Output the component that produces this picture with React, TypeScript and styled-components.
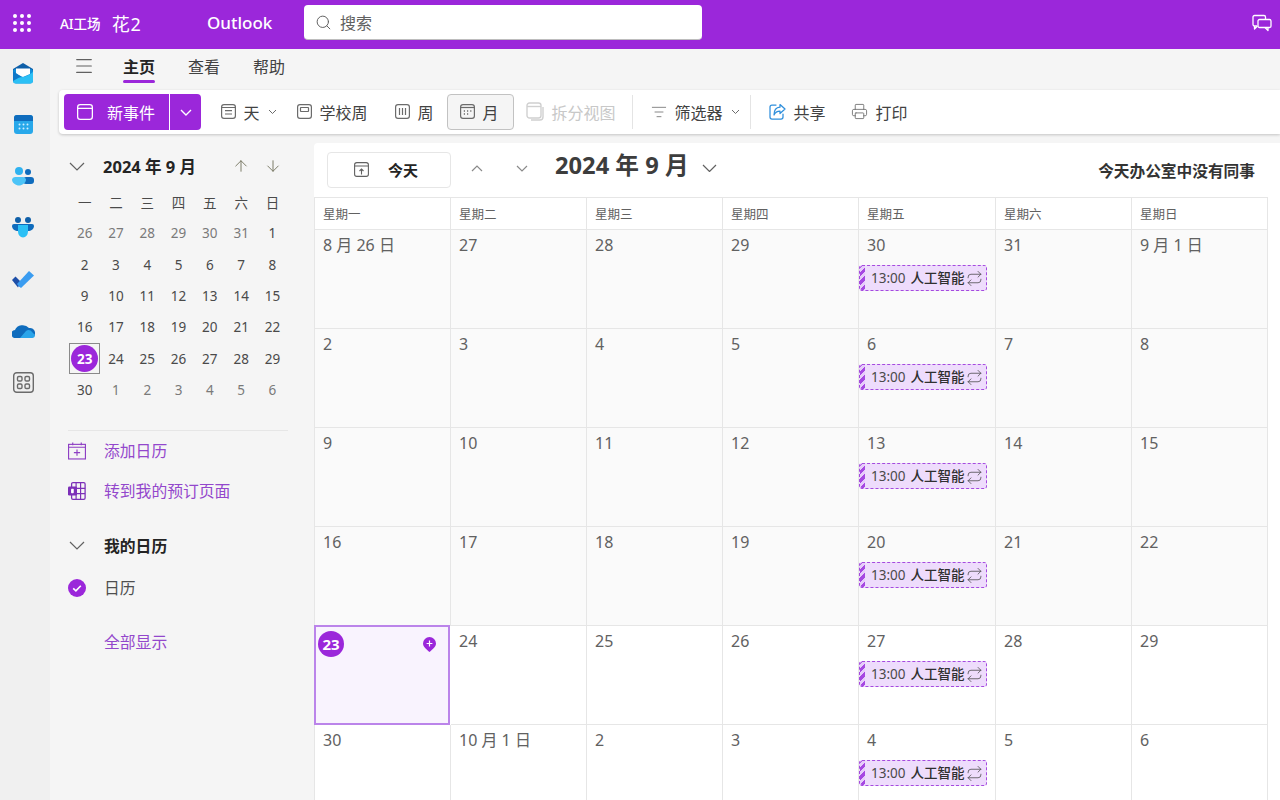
import styled, { createGlobalStyle } from 'styled-components';
import { ArrowUp, ArrowDown, Search, Menu, Printer, ListFilter, Repeat } from 'lucide-react';

const PURPLE = '#9b27da';
const FONT = `'Noto Sans', 'Noto Sans CJK SC', sans-serif`;

const GlobalStyle = createGlobalStyle`
  html, body { margin: 0; padding: 0; height: 100%; overflow: hidden; }
  body { font-family: ${FONT}; background: #f5f5f5; color: #424242; }
  * { box-sizing: border-box; }
`;

const Page = styled.div`
  display: flex;
  flex-direction: column;
  width: 1280px;
  height: 800px;
  overflow: hidden;
`;

const TopBar = styled.header`
  flex: none;
  display: flex;
  align-items: center;
  height: 49px;
  background: ${PURPLE};
  color: #fff;
  padding: 0 8px 4px 0;
`;

const Waffle = styled.div`
  display: grid;
  grid-template-columns: repeat(3, 4px);
  gap: 3px;
  margin-left: 13px;
  span { width: 4px; height: 4px; border-radius: 50%; background: #fff; }
`;

const Brand = styled.div`
  display: flex;
  align-items: center;
  gap: 11px;
  margin-left: 29px;
  width: 115px;
  font-size: 13.5px;
  font-weight: 500;
  white-space: nowrap;
`;

const BrandMark = styled.span`
  font-size: 18px;
  font-weight: 400;
  letter-spacing: 1px;
`;

const AppName = styled.div`
  margin-left: 32px;
  width: 97px;
  font-size: 17px;
  font-weight: 500;
`;

const SearchBox = styled.div`
  display: flex;
  align-items: center;
  gap: 8px;
  width: 398px;
  height: 35px;
  padding-left: 11px;
  background: #fff;
  border-radius: 4px;
  border-bottom: 1px solid #bdbdbd;
  color: #616161;
  font-size: 16px;
`;

const TopRight = styled.div`
  margin-left: auto;
  display: flex;
`;

const Body = styled.div`
  flex: 1;
  display: flex;
  min-height: 0;
`;

const Rail = styled.nav`
  flex: none;
  width: 50px;
  background: #f0f0f0;
  display: flex;
  flex-direction: column;
  align-items: center;
  padding-right: 4px;
`;

const RailItem = styled.div`
  height: 51.5px;
  width: 100%;
  padding-bottom: 3px;
  display: flex;
  align-items: center;
  justify-content: center;
`;

const Main = styled.div`
  flex: 1;
  min-width: 0;
  display: flex;
  flex-direction: column;
`;

const TabRow = styled.div`
  flex: none;
  height: 41px;
  display: flex;
  align-items: center;
  padding: 0 0 8px 23px;
`;

const Tab = styled.div<{ $active?: boolean }>`
  position: relative;
  margin-left: ${(p) => (p.$active ? '28px' : '33px')};
  font-size: 16px;
  font-weight: ${(p) => (p.$active ? 700 : 400)};
  color: ${(p) => (p.$active ? '#242424' : '#424242')};
  &::after {
    content: '';
    display: ${(p) => (p.$active ? 'block' : 'none')};
    position: absolute;
    left: 0;
    right: 0;
    bottom: -5px;
    height: 3px;
    border-radius: 2px;
    background: ${PURPLE};
  }
`;

const Toolbar = styled.div`
  flex: none;
  height: 44px;
  margin-left: 9px;
  display: flex;
  align-items: center;
  padding-left: 5px;
  background: #fff;
  border-radius: 4px 0 0 4px;
  box-shadow: 0 1px 3px rgba(0, 0, 0, 0.2);
  font-size: 16px;
`;

const NewEvent = styled.div`
  display: flex;
  width: 137px;
  height: 36px;
  margin-right: 7.5px;
  border-radius: 4px;
  overflow: hidden;
  background: ${PURPLE};
  color: #fff;
`;

const NewEventMain = styled.div`
  flex: 1;
  display: flex;
  align-items: center;
  gap: 14px;
  padding-left: 13px;
  border-right: 1px solid #fff;
`;

const NewEventArrow = styled.div`
  width: 31px;
  display: flex;
  align-items: center;
  justify-content: center;
`;

const ToolButton = styled.div<{ $selected?: boolean; $disabled?: boolean; $endPad?: number; $after?: number }>`
  height: 36px;
  display: flex;
  align-items: center;
  gap: 8px;
  padding: 0 ${(p) => p.$endPad ?? 12}px 1px 12px;
  margin-right: ${(p) => p.$after ?? 0}px;
  border-radius: 4px;
  white-space: nowrap;
  color: ${(p) => (p.$disabled ? '#c8c8c8' : '#424242')};
  background: ${(p) => (p.$selected ? '#f5f5f5' : 'transparent')};
  border: ${(p) => (p.$selected ? '1px solid #c2c2c2' : 'none')};
  svg { color: ${(p) => (p.$disabled ? '#d0d0d0' : '#6b6b6b')}; }
`;

const ToolDivider = styled.div`
  width: 1px;
  height: 34px;
  background: #e4e4e4;
  margin: 0 6px 0 4px;
`;

const Lower = styled.div`
  flex: 1;
  min-height: 0;
  display: flex;
  margin-top: 9px;
`;

const Sidebar = styled.aside`
  flex: none;
  width: 264px;
  padding: 9px 26px 0 18px;
`;

const MiniHeader = styled.div`
  display: flex;
  align-items: center;
  height: 28px;
  padding-left: 1px;
  color: #616161;
`;

const MiniTitle = styled.div`
  margin-left: 18px;
  font-size: 16.5px;
  font-weight: 700;
  color: #242424;
  flex: 1;
`;

const MiniArrows = styled.div`
  display: flex;
  gap: 14px;
  margin-right: 6px;
  color: #70705a;
`;

const MiniGrid = styled.div`
  display: grid;
  grid-template-columns: repeat(7, 31.3px);
  grid-auto-rows: 31.3px;
  margin-top: 6.5px;
  margin-left: 1px;
`;

const MiniCell = styled.div<{ $muted?: boolean }>`
  display: flex;
  align-items: center;
  justify-content: center;
  font-size: 13.5px;
  color: ${(p) => (p.$muted ? '#7a7a7a' : '#4a4a4a')};
`;

const MiniToday = styled(MiniCell)`
  border: 1px solid #8a8a8a;
`;

const MiniTodayDot = styled.span`
  width: 27px;
  height: 27px;
  border-radius: 50%;
  background: ${PURPLE};
  color: #fff;
  font-weight: 700;
  display: flex;
  align-items: center;
  justify-content: center;
`;

const SideDivider = styled.div`
  height: 1px;
  background: #e6e6e6;
  margin-top: 24px;
`;

const SideRow = styled.div<{ $top: number; $link?: boolean; $bold?: boolean }>`
  display: flex;
  align-items: center;
  gap: 18px;
  height: 24px;
  margin-top: ${(p) => p.$top}px;
  font-size: 15.8px;
  font-weight: ${(p) => (p.$bold ? 700 : 400)};
  color: ${(p) => (p.$link ? '#9347cc' : p.$bold ? '#242424' : '#4f4f4f')};
`;

const SideIconSlot = styled.div`
  width: 18px;
  display: flex;
  justify-content: center;
  color: #616161;
`;

const Surface = styled.section`
  flex: 1;
  min-width: 0;
  background: #fff;
  border-radius: 4px 0 0 0;
  padding-right: 12px;
`;

const CalHeader = styled.div`
  height: 54px;
  display: flex;
  align-items: center;
  padding: 0 13px;
`;

const TodayButton = styled.div`
  width: 124px;
  height: 36px;
  display: flex;
  align-items: center;
  gap: 19px;
  padding-left: 26px;
  margin-top: -1px;
  border: 1px solid #e6e6e6;
  border-radius: 4px;
  font-size: 15px;
  font-weight: 700;
  color: #242424;
`;

const NavArrow = styled.div<{ $gap: number }>`
  display: flex;
  margin: -4px 0 0 ${(p) => p.$gap}px;
  color: #8a8a8a;
`;

const CalTitle = styled.div`
  margin: -12px 0 0 27px;
  font-size: 23.7px;
  font-weight: 700;
  color: #3d3d3d;
  white-space: nowrap;
`;

const TitleChevron = styled.div`
  display: flex;
  margin: -4px 0 0 13px;
  color: #616161;
`;

const Presence = styled.div`
  margin-left: auto;
  font-size: 15.7px;
  font-weight: 700;
  color: #333;
`;

const Grid = styled.div`
  display: grid;
  grid-template-columns: 136px 136px 136px 136px 137px 136px 135px;
  grid-template-rows: 32px repeat(6, 99px);
  border-top: 1px solid #e6e6e6;
  border-left: 1px solid #e6e6e6;
  border-right: 1px solid #e6e6e6;
`;

const DayHead = styled.div`
  display: flex;
  align-items: center;
  padding-left: 8px;
  font-size: 12.5px;
  color: #616161;
  border-right: 1px solid #e6e6e6;
  border-bottom: 1px solid #e6e6e6;
  &:nth-child(7) { border-right: none; }
`;

const Cell = styled.div<{ $past?: boolean }>`
  position: relative;
  padding: 4px 0 0 8px;
  background: ${(p) => (p.$past ? '#fafafa' : '#fff')};
  border-right: 1px solid #e6e6e6;
  border-bottom: 1px solid #e6e6e6;
  &:nth-child(7n) { border-right: none; }
  font-size: 16px;
  line-height: 22px;
  color: #616161;
`;

const TodayCell = styled(Cell)`
  margin: -1px 1px 0 -1px;
  padding: 0;
  background: #f9f3fe;
  outline: 2px solid #bb84ea;
  outline-offset: -2px;
`;

const TodayBadge = styled.div`
  position: absolute;
  left: 4px;
  top: 6px;
  width: 26px;
  height: 26px;
  border-radius: 50%;
  background: ${PURPLE};
  color: #fff;
  font-weight: 700;
  font-size: 15px;
  display: flex;
  align-items: center;
  justify-content: center;
`;

const TodayPin = styled.div`
  position: absolute;
  right: 13px;
  top: 12px;
  display: flex;
`;

const EventChip = styled.div`
  position: relative;
  display: flex;
  align-items: center;
  gap: 1px;
  width: 128px;
  height: 26px;
  margin: 9px 0 0 -8px;
  padding-left: 11px;
  overflow: hidden;
  background: #eedcfc;
  border: 1px dashed #a54adf;
  border-radius: 3px;
  font-size: 13.5px;
  color: #4a4a4a;
  white-space: nowrap;
  &::before {
    content: '';
    position: absolute;
    left: -1px;
    top: -1px;
    bottom: -1px;
    width: 6px;
    background: repeating-linear-gradient(135deg, #a648e2 0 3px, #e6ccfa 3px 6px);
  }
`;

const EventTitle = styled.span`
  font-weight: 500;
  color: #303030;
  margin-left: 4px;
`;

const Chevron = ({ w, up, stroke = 1.2 }: { w: number; up?: boolean; stroke?: number }) => {
  const h = w / 2 + 1;
  const d = up ? `M1 ${h - 1} L${w / 2} 1 L${w - 1} ${h - 1}` : `M1 1 L${w / 2} ${h - 1} L${w - 1} 1`;
  return (
    <svg width={w} height={h} viewBox={`0 0 ${w} ${h}`} fill="none" stroke="currentColor" strokeWidth={stroke}>
      <path d={d} />
    </svg>
  );
};

const MailIcon = () => (
  <svg width="22" height="21" viewBox="0 0 22 21">
    <path d="M11 0 L21 6 V10 H1 V6 Z" fill="#0f5fa8" />
    <rect x="1" y="6" width="20" height="14.5" rx="3" fill="#0f8fdc" />
    <path d="M4 5.5 H18 V11 L11 14 L4 11 Z" fill="#fff" />
    <path d="M21 9 V17.5 A3 3 0 0 1 18 20.5 H4 A3 3 0 0 1 1 17.5 V13 C8 16 15 14 21 9 Z" fill="#2cc0f5" />
    <path d="M1 8 L1 18 L9 13.5 Z" fill="#0f78c8" />
  </svg>
);

const CalendarColorIcon = () => (
  <svg width="19" height="19" viewBox="0 0 19 19">
    <rect x="0" y="0" width="19" height="19" rx="3" fill="#28a8ea" />
    <path d="M0 6 V3 A3 3 0 0 1 3 0 H16 A3 3 0 0 1 19 3 V6 Z" fill="#0f6cbd" />
    {[5.5, 9.5, 13.5].map((x) => (
      <circle key={x} cx={x} cy="9.5" r="1" fill="#cfeeff" />
    ))}
    {[5.5, 9.5, 13.5].map((x) => (
      <circle key={x} cx={x} cy="13.5" r="1" fill="#cfeeff" />
    ))}
  </svg>
);

const PeopleIcon = () => (
  <svg width="22" height="19" viewBox="0 0 22 19">
    <circle cx="16" cy="5" r="3" fill="#0f6cbd" />
    <rect x="11" y="10" width="11" height="7" rx="3" fill="#0f6cbd" />
    <circle cx="7" cy="4" r="4" fill="#2fb2f0" />
    <path d="M0 12.5 A3 3 0 0 1 3 10 H11 A3 3 0 0 1 14 12.5 C14 16 10 18.5 7 18.5 C4 18.5 0 16 0 12.5 Z" fill="#4cc4f7" />
  </svg>
);

const TeamsIcon = () => (
  <svg width="22" height="21" viewBox="0 0 22 21">
    <circle cx="6" cy="3" r="3" fill="#0f5fa8" />
    <circle cx="16" cy="3" r="3" fill="#0f5fa8" />
    <path d="M0 9 A2 2 0 0 1 2 7 H20 A2 2 0 0 1 22 9 C22 12 19 14 16 14 H6 C3 14 0 12 0 9 Z" fill="#0f6cbd" />
    <path d="M6 8 H16 V14.5 A5 6 0 0 1 6 14.5 Z" fill="#2cc0f5" />
  </svg>
);

const TodoIcon = () => (
  <svg width="22" height="17" viewBox="0 0 22 17">
    <path d="M0 9 L3.5 5.5 L9 11 L6 16.5 Z" fill="#1e4fa8" />
    <path d="M7 15.5 L5 13 L17 0 L22 4.5 L9 17 Z" fill="#3a9cf0" />
  </svg>
);

const CloudIcon = () => (
  <svg width="23" height="15" viewBox="0 0 23 15">
    <path d="M4 15 A4 4 0 0 1 3 7 A8 7 0 0 1 17 5 A5 5 0 0 1 19 15 Z" fill="#0f6cbd" />
    <path d="M8 15 L14 8 C16 6 19 7 20 9 L23 12 A3 3 0 0 1 20 15 Z" fill="#2aa5ea" />
  </svg>
);

const AppsIcon = () => (
  <svg width="21" height="21" viewBox="0 0 21 21" fill="none" stroke="#6b6b6b" strokeWidth="1.4">
    <rect x="0.7" y="0.7" width="19.6" height="19.6" rx="3" />
    <rect x="4.5" y="4.5" width="4.5" height="4.5" rx="1.3" />
    <rect x="12" y="4.5" width="4.5" height="4.5" rx="1.3" />
    <rect x="4.5" y="12" width="4.5" height="4.5" rx="1.3" />
    <rect x="12" y="12" width="4.5" height="4.5" rx="1.3" />
  </svg>
);

const FeedbackIcon = () => (
  <svg width="20" height="18" viewBox="0 0 20 18" fill="none" stroke="#fff" strokeWidth="1.3" strokeLinejoin="round">
    <path d="M5 12 H2.5 A1.5 1.5 0 0 1 1 10.5 V3 A1.5 1.5 0 0 1 2.5 1.5 H12 A1.5 1.5 0 0 1 13.5 3 V5" />
    <path d="M2.5 12 V15 L5.5 12" />
    <rect x="6" y="5.5" width="13" height="8" rx="1.5" />
    <path d="M16 13.5 V16.5 L13 13.5" />
  </svg>
);

const Box = ({ size = 15, children }: { size?: number; children?: React.ReactNode }) => (
  <svg width={size} height={size} viewBox="0 0 15 15" fill="none" stroke="currentColor" strokeWidth="1.2">
    <rect x="0.6" y="0.6" width="13.8" height="13.8" rx="2.4" />
    {children}
  </svg>
);

const OpenCalendarIcon = () => (
  <Box size={16}>
    <path d="M0.6 4 H14.4" />
  </Box>
);

const DayIcon = () => (
  <Box>
    <path d="M0.6 3.5 H14.4 M4 6.6 H11 M4 10 H11" />
  </Box>
);

const WorkWeekIcon = () => (
  <Box>
    <rect x="3.5" y="3.5" width="8" height="4" rx="0.5" />
  </Box>
);

const WeekIcon = () => (
  <Box>
    <path d="M4.5 4 V11 M7.5 4 V11 M10.5 4 V11" />
  </Box>
);

const MonthIcon = () => (
  <Box>
    <path d="M0.6 3.5 H14.4" />
    <path d="M3.8 7 H5 M7 7 H8.2 M10.2 7 H11.4 M3.8 10 H5 M7 10 H8.2" strokeWidth="1.4" />
  </Box>
);

const SplitIcon = () => (
  <svg width="18" height="19" viewBox="0 0 18 19" fill="none" stroke="currentColor" strokeWidth="1.4">
    <rect x="1" y="1" width="14" height="15" rx="2.5" />
    <path d="M1 4.5 H15" />
    <path d="M17 5 V15 A3 3 0 0 1 14 18 H5" />
  </svg>
);

const ShareIcon = () => (
  <svg width="17" height="17" viewBox="0 0 17 17" fill="none" style={{ color: '#2f8fdc' }} stroke="currentColor" strokeWidth="1.25" strokeLinejoin="round" strokeLinecap="round">
    <path d="M7 2 H3 A2 2 0 0 0 1 4 V14 A2 2 0 0 0 3 16 H12 A2 2 0 0 0 14 14 V11" />
    <path d="M11 1.5 L16 6 L11 10.5 V8 C8 8 6 9.5 5 12 C5 8 7 4.5 11 4.2 Z" />
  </svg>
);

const TodayIcon = () => (
  <svg width="15" height="15" viewBox="0 0 15 15" fill="none" stroke="#616161" strokeWidth="1.1">
    <rect x="0.6" y="0.6" width="13.8" height="13.8" rx="2.2" />
    <path d="M0.6 4 H14.4 M7.5 12.5 V7 M5.5 9 L7.5 7 L9.5 9" />
  </svg>
);

const AddCalendarIcon = () => (
  <svg width="19" height="18" viewBox="0 0 19 18" fill="none" stroke="#8e3fc4" strokeWidth="1.2">
    <rect x="0.6" y="2" width="17.8" height="15.4" />
    <path d="M0.6 5 H18.4 M5 0 V3 M14 0 V3 M9.5 7.5 V14 M6.2 10.7 H12.8" />
  </svg>
);

const BookingsIcon = () => (
  <svg width="20" height="20" viewBox="0 0 20 20">
    <rect x="4" y="0.7" width="15" height="18.6" rx="1.5" fill="none" stroke="#7c2fb8" strokeWidth="1.4" />
    <path d="M4 7 H19 M4 13 H19 M9 1 V19 M14 1 V19" stroke="#7c2fb8" strokeWidth="1.3" />
    <rect x="0" y="5" width="10" height="10" rx="1.5" fill="#7c2fb8" />
    <rect x="3.4" y="7.6" width="3" height="4.8" rx="0.8" fill="#fff" />
  </svg>
);

const CheckCircle = () => (
  <svg width="18" height="18" viewBox="0 0 18 18">
    <circle cx="9" cy="9" r="9" fill={PURPLE} />
    <path d="M5.2 9.3 L7.9 11.8 L12.8 6.8" fill="none" stroke="#fff" strokeWidth="1.6" />
  </svg>
);

const PinIcon = () => (
  <svg width="13" height="15" viewBox="0 0 13 15">
    <path d="M6.5 0 A6.5 6.5 0 0 1 13 6.5 C13 9.5 10 12 6.5 15 C3 12 0 9.5 0 6.5 A6.5 6.5 0 0 1 6.5 0 Z" fill={PURPLE} />
    <path d="M6.5 3.6 V9.4 M3.6 6.5 H9.4" stroke="#fff" strokeWidth="1.2" />
  </svg>
);

const weekLabels = ['星期一', '星期二', '星期三', '星期四', '星期五', '星期六', '星期日'];
const miniHeads = ['一', '二', '三', '四', '五', '六', '日'];
const miniDays = [
  26, 27, 28, 29, 30, 31, 1, 2, 3, 4, 5, 6, 7, 8, 9, 10, 11, 12, 13, 14, 15, 16, 17, 18, 19, 20,
  21, 22, 23, 24, 25, 26, 27, 28, 29, 30, 1, 2, 3, 4, 5, 6,
];
const monthCells = [
  '8 月 26 日', '27', '28', '29', '30', '31', '9 月 1 日',
  '2', '3', '4', '5', '6', '7', '8',
  '9', '10', '11', '12', '13', '14', '15',
  '16', '17', '18', '19', '20', '21', '22',
  '23', '24', '25', '26', '27', '28', '29',
  '30', '10 月 1 日', '2', '3', '4', '5', '6',
];

export default function App() {
  return (
    <Page>
      <GlobalStyle />
      <TopBar>
        <Waffle>
          {Array.from({ length: 9 }).map((_, i) => (
            <span key={i} />
          ))}
        </Waffle>
        <Brand>
          <span>AI工场</span>
          <BrandMark>花2</BrandMark>
        </Brand>
        <AppName>Outlook</AppName>
        <SearchBox>
          <Search size={17} strokeWidth={1.4} />
          搜索
        </SearchBox>
        <TopRight>
          <FeedbackIcon />
        </TopRight>
      </TopBar>
      <Body>
        <Rail>
          <RailItem><MailIcon /></RailItem>
          <RailItem><CalendarColorIcon /></RailItem>
          <RailItem><PeopleIcon /></RailItem>
          <RailItem><TeamsIcon /></RailItem>
          <RailItem><TodoIcon /></RailItem>
          <RailItem><CloudIcon /></RailItem>
          <RailItem><AppsIcon /></RailItem>
        </Rail>
        <Main>
          <TabRow>
            <Menu size={22} strokeWidth={1.2} color="#616161" />
            <Tab $active>主页</Tab>
            <Tab>查看</Tab>
            <Tab>帮助</Tab>
          </TabRow>
          <Toolbar>
            <NewEvent>
              <NewEventMain>
                <OpenCalendarIcon />
                新事件
              </NewEventMain>
              <NewEventArrow>
                <Chevron w={12} stroke={1.4} />
              </NewEventArrow>
            </NewEvent>
            <ToolButton $endPad={8}>
              <DayIcon />
              天
              <Chevron w={9} stroke={1} />
            </ToolButton>
            <ToolButton $after={3}>
              <WorkWeekIcon />
              学校周
            </ToolButton>
            <ToolButton $after={1}>
              <WeekIcon />
              周
            </ToolButton>
            <ToolButton $selected $endPad={14}>
              <MonthIcon />
              月
            </ToolButton>
            <ToolButton $disabled>
              <SplitIcon />
              拆分视图
            </ToolButton>
            <ToolDivider />
            <ToolButton $endPad={6}>
              <ListFilter size={16} strokeWidth={1.2} />
              筛选器
              <Chevron w={9} stroke={1} />
            </ToolButton>
            <ToolDivider />
            <ToolButton $endPad={13}>
              <ShareIcon />
              共享
            </ToolButton>
            <ToolButton>
              <Printer size={17} strokeWidth={1.2} />
              打印
            </ToolButton>
          </Toolbar>
          <Lower>
            <Sidebar>
              <MiniHeader>
                <Chevron w={16} />
                <MiniTitle>2024 年 9 月</MiniTitle>
                <MiniArrows>
                  <ArrowUp size={18} strokeWidth={1.2} />
                  <ArrowDown size={18} strokeWidth={1.2} />
                </MiniArrows>
              </MiniHeader>
              <MiniGrid>
                {miniHeads.map((d) => (
                  <MiniCell key={d}>{d}</MiniCell>
                ))}
                {miniDays.map((d, i) =>
                  i === 28 ? (
                    <MiniToday key={i}>
                      <MiniTodayDot>{d}</MiniTodayDot>
                    </MiniToday>
                  ) : (
                    <MiniCell key={i} $muted={i < 6 || i > 35}>
                      {d}
                    </MiniCell>
                  ),
                )}
              </MiniGrid>
              <SideDivider />
              <SideRow $top={8} $link>
                <SideIconSlot><AddCalendarIcon /></SideIconSlot>
                添加日历
              </SideRow>
              <SideRow $top={16} $link>
                <SideIconSlot><BookingsIcon /></SideIconSlot>
                转到我的预订页面
              </SideRow>
              <SideRow $top={31} $bold>
                <SideIconSlot><Chevron w={16} /></SideIconSlot>
                我的日历
              </SideRow>
              <SideRow $top={18}>
                <SideIconSlot><CheckCircle /></SideIconSlot>
                日历
              </SideRow>
              <SideRow $top={30} $link>
                <SideIconSlot />
                全部显示
              </SideRow>
            </Sidebar>
            <Surface>
              <CalHeader>
                <TodayButton>
                  <TodayIcon />
                  今天
                </TodayButton>
                <NavArrow $gap={20}><Chevron w={12} up /></NavArrow>
                <NavArrow $gap={33}><Chevron w={12} /></NavArrow>
                <CalTitle>2024 年 9 月</CalTitle>
                <TitleChevron><Chevron w={15} /></TitleChevron>
                <Presence>今天办公室中没有同事</Presence>
              </CalHeader>
              <Grid>
                {weekLabels.map((d) => (
                  <DayHead key={d}>{d}</DayHead>
                ))}
                {monthCells.map((label, i) => {
                  if (i === 28) {
                    return (
                      <TodayCell key={i}>
                        <TodayBadge>{label}</TodayBadge>
                        <TodayPin><PinIcon /></TodayPin>
                      </TodayCell>
                    );
                  }
                  return (
                    <Cell key={i} $past={i < 28}>
                      {label}
                      {i % 7 === 4 && (
                        <EventChip>
                          13:00
                          <EventTitle>人工智能</EventTitle>
                          <Repeat size={17} strokeWidth={1.1} />
                        </EventChip>
                      )}
                    </Cell>
                  );
                })}
              </Grid>
            </Surface>
          </Lower>
        </Main>
      </Body>
    </Page>
  );
}
